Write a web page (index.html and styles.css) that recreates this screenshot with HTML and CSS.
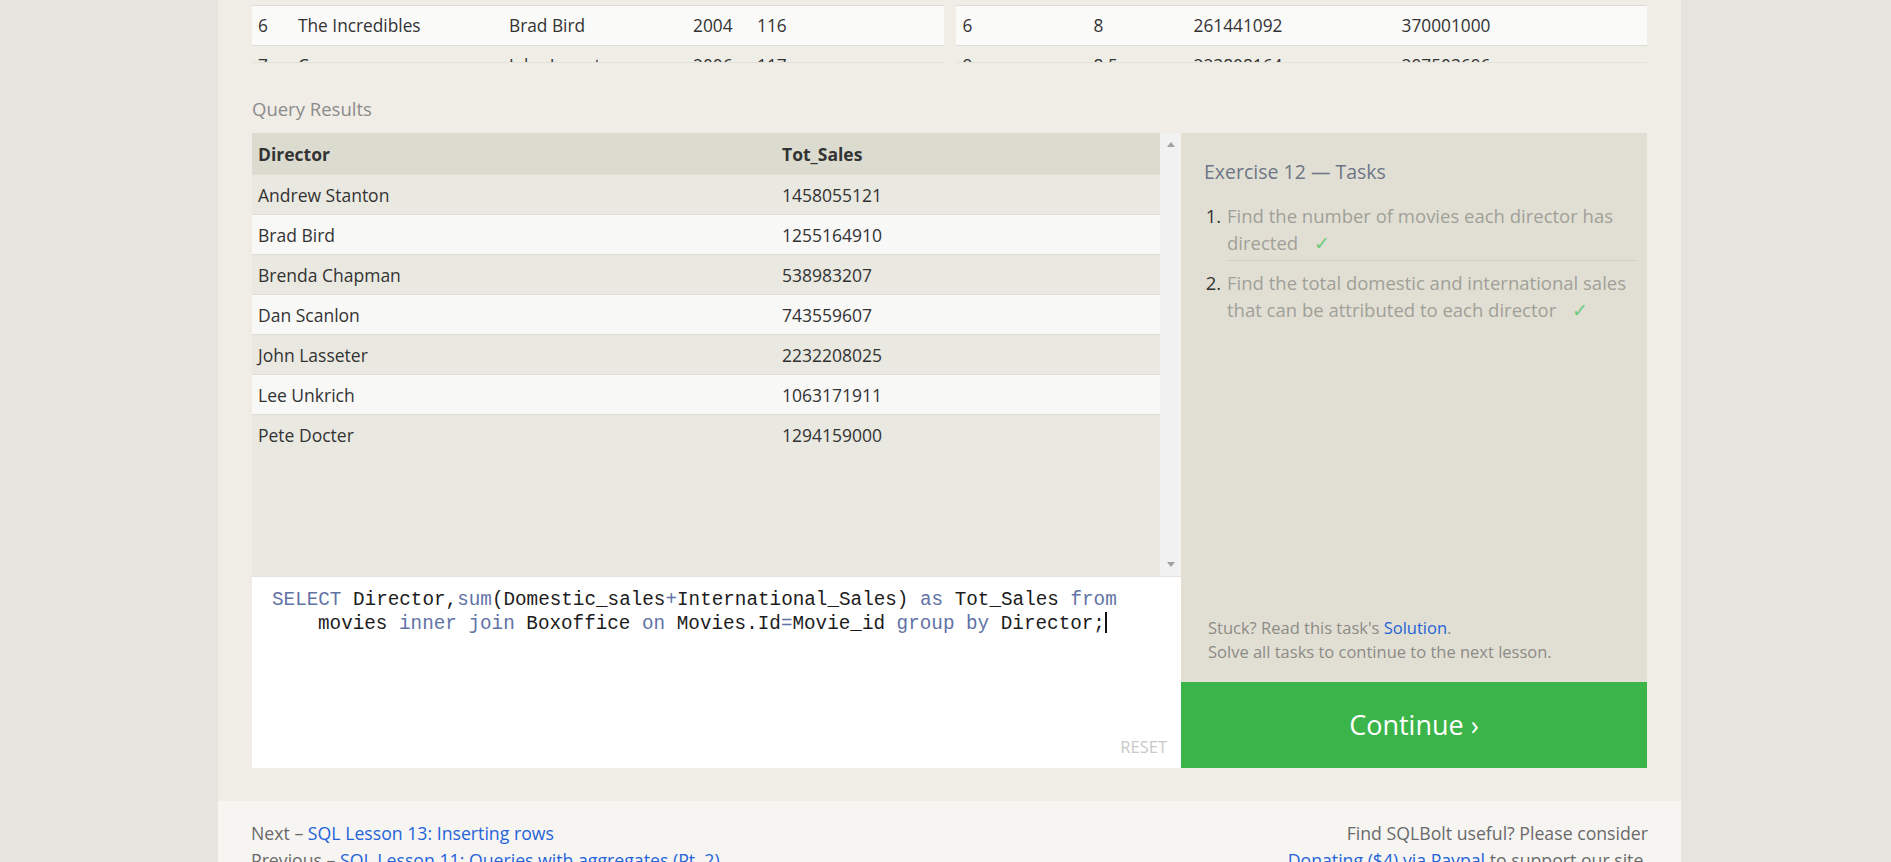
FILE: index.html
```html
<!DOCTYPE html>
<html>
<head>
<meta charset="utf-8">
<title>SQLBolt - Exercise 12</title>
<link rel="stylesheet" href="styles.css">
</head>
<body>
<div class="page">
  <div class="content">
    <div class="top-tables">
      <div class="mini-table left">
        <div class="mrow dark"><span>5</span><span>Ratatouille</span><span>Brad Bird</span><span>2007</span><span>115</span></div>
        <div class="mrow light"><span>6</span><span>The Incredibles</span><span>Brad Bird</span><span>2004</span><span>116</span></div>
        <div class="mrow dark"><span>7</span><span>Cars</span><span>John Lasseter</span><span>2006</span><span>117</span></div>
      </div>
      <div class="mini-table right">
        <div class="mrow dark"><span>5</span><span>8</span><span>206445654</span><span>417277164</span></div>
        <div class="mrow light"><span>6</span><span>8</span><span>261441092</span><span>370001000</span></div>
        <div class="mrow dark"><span>9</span><span>8.5</span><span>223808164</span><span>297503696</span></div>
      </div>
    </div>

    <div class="label">Query Results</div>

    <div class="exercise">
      <div class="work">
        <div class="results">
          <div class="results-table">
            <div class="rrow head"><span>Director</span><span>Tot_Sales</span></div>
            <div class="rrow odd"><span>Andrew Stanton</span><span>1458055121</span></div>
            <div class="rrow even"><span>Brad Bird</span><span>1255164910</span></div>
            <div class="rrow odd"><span>Brenda Chapman</span><span>538983207</span></div>
            <div class="rrow even"><span>Dan Scanlon</span><span>743559607</span></div>
            <div class="rrow odd"><span>John Lasseter</span><span>2232208025</span></div>
            <div class="rrow even"><span>Lee Unkrich</span><span>1063171911</span></div>
            <div class="rrow odd"><span>Pete Docter</span><span>1294159000</span></div>
          </div>
          <div class="scrollbar">
            <span class="arrow up"></span>
            <span class="arrow down"></span>
          </div>
        </div>
        <div class="editor">
          <div class="code-line"><span class="kw">SELECT</span> Director,<span class="kw">sum</span>(Domestic_sales<span class="kw">+</span>International_Sales) <span class="kw">as</span> Tot_Sales <span class="kw">from</span></div>
          <div class="code-line wrap">movies <span class="kw">inner</span> <span class="kw">join</span> Boxoffice <span class="kw">on</span> Movies.Id<span class="kw">=</span>Movie_id <span class="kw">group</span> <span class="kw">by</span> Director;<span class="cursor"></span></div>
          <div class="reset">RESET</div>
        </div>
      </div>

      <div class="tasks">
        <div class="tasks-title">Exercise 12 — Tasks</div>
        <ol class="task-list">
          <li><span class="task-text">Find the number of movies each director has directed</span><span class="check">✓</span></li>
          <li><span class="task-text">Find the total domestic and international sales that can be attributed to each director</span><span class="check">✓</span></li>
        </ol>
        <div class="spacer"></div>
        <div class="stuck">
          Stuck? Read this task's <a href="#">Solution</a>.<br>
          Solve all tasks to continue to the next lesson.
        </div>
        <div class="continue">Continue ›</div>
      </div>
    </div>
  </div>

  <div class="footer">
    <div class="foot-left">
      <div>Next – <a href="#">SQL Lesson 13: Inserting rows</a></div>
      <div>Previous – <a href="#">SQL Lesson 11: Queries with aggregates (Pt. 2)</a></div>
    </div>
    <div class="foot-right">
      <div>Find SQLBolt useful? Please consider</div>
      <div><a href="#">Donating ($4) via Paypal</a> to support our site.</div>
    </div>
  </div>
</div>
</body>
</html>
```

FILE: styles.css
```css
* { box-sizing: border-box; }

html, body {
  margin: 0;
  padding: 0;
  height: 100%;
  overflow: hidden;
}

body {
  background: #e7e4e0;
  font-family: "Open Sans", "Noto Sans", sans-serif;
  color: #333;
}

a { color: #2563d9; text-decoration: none; }

.page {
  width: 1463px;
  margin-left: 218px;
  background: #f0ede6;
  min-height: 100%;
}

.content {
  padding: 0 34px 33px 34px;
}

/* top tables (scrolled away) */
.top-tables {
  display: flex;
  gap: 12px;
  height: 63px;
}

.mini-table {
  flex: 1;
  height: 63px;
  overflow: hidden;
  border-bottom: 1px solid #e3e1da;
  font-size: 17.3px;
}

.mrow {
  height: 40px;
  display: grid;
  align-items: center;
  padding-left: 6px;
  border-top: 1px solid #dddcd5;
}

.mrow:first-child { margin-top: -35px; }

.mini-table.left .mrow { grid-template-columns: 40px 211px 184px 64px 1fr; }
.mini-table.right .mrow { grid-template-columns: 131px 100px 208px 1fr; padding-left: 7px; }

.mrow.light { background: #fafaf9; }
.mrow.dark { background: #eeede6; }

.label {
  margin-top: 35px;
  margin-bottom: 13px;
  line-height: 22px;
  font-size: 18.5px;
  color: #8b8b8b;
}

/* exercise area */
.exercise {
  display: flex;
  height: 635px;
}

.work {
  width: 929px;
  display: flex;
  flex-direction: column;
}

.results {
  height: 443px;
  flex-shrink: 0;
  display: flex;
  background: #eae9e1;
}

.results-table {
  width: 908px;
  font-size: 17.5px;
}

.rrow {
  display: grid;
  grid-template-columns: 524px 1fr;
  align-items: center;
  height: 40px;
  padding-left: 6px;
  border-top: 1px solid #dfded6;
}

.rrow.head {
  height: 41px;
  border-top: none;
  background: #dcdbd0;
  font-weight: 700;
  color: #333;
}

.rrow.odd { background: #eae9e1; }
.rrow.even { background: #f8f8f7; }

.scrollbar {
  width: 21px;
  background: #f1f1f1;
  display: flex;
  flex-direction: column;
  justify-content: space-between;
  align-items: center;
  padding: 9px 0 9px 0;
}

.arrow {
  width: 0;
  height: 0;
  border-left: 4.5px solid transparent;
  border-right: 4.5px solid transparent;
}

.arrow.up { border-bottom: 5px solid #a3a3a3; }
.arrow.down { border-top: 5px solid #a3a3a3; }

.editor {
  position: relative;
  flex: 1;
  background: #fff;
  border-top: 1px solid #e4e2dc;
  padding: 12px 0 0 20px;
  font-family: "Liberation Mono", "DejaVu Sans Mono", monospace;
  font-size: 19.3px;
  line-height: 23px;
  color: #1c1c1c;
}

.code-line { white-space: pre; }
.code-line.wrap { padding-left: 46px; }

.kw { color: #6273a6; }

.cursor {
  display: inline-block;
  width: 0;
  height: 21px;
  border-left: 2px solid #111;
  vertical-align: -4px;
}

.reset {
  position: absolute;
  right: 14px;
  bottom: 10px;
  font-family: "Open Sans", "Noto Sans", sans-serif;
  font-size: 16.5px;
  color: #c9c9c9;
}

/* tasks panel */
.tasks {
  width: 466px;
  background: #e1dfd4;
  display: flex;
  flex-direction: column;
}

.tasks-title {
  padding: 26px 0 0 23px;
  font-size: 19.5px;
  line-height: 26px;
  color: #6e7686;
}

.task-list {
  margin: 17px 10px 0 22px;
  padding: 0 0 0 23px;
  font-size: 18.5px;
  line-height: 27px;
  color: #a09f98;
}

.task-list li { padding: 0 0 4px 1px; }
.task-list li + li { border-top: 1px solid #d3d1c6; padding-top: 8px; }
.task-list li::marker { color: #333; }

.check {
  color: #6ccb7c;
  margin-left: 16px;
}

.spacer { flex: 1; }

.stuck {
  padding: 0 10px 18px 27px;
  font-size: 16.5px;
  line-height: 24px;
  color: #8d8b86;
}

.continue {
  height: 86px;
  background: #3bb54a;
  color: #fff;
  font-size: 27px;
  padding-bottom: 2px;
  display: flex;
  align-items: center;
  justify-content: center;
}

/* footer */
.footer {
  background: #f6f5f2;
  display: flex;
  justify-content: space-between;
  padding: 19px 33px 20px 33px;
  font-size: 17.7px;
  line-height: 27px;
  color: #6a6a6a;
}

.foot-right { text-align: right; }
```
